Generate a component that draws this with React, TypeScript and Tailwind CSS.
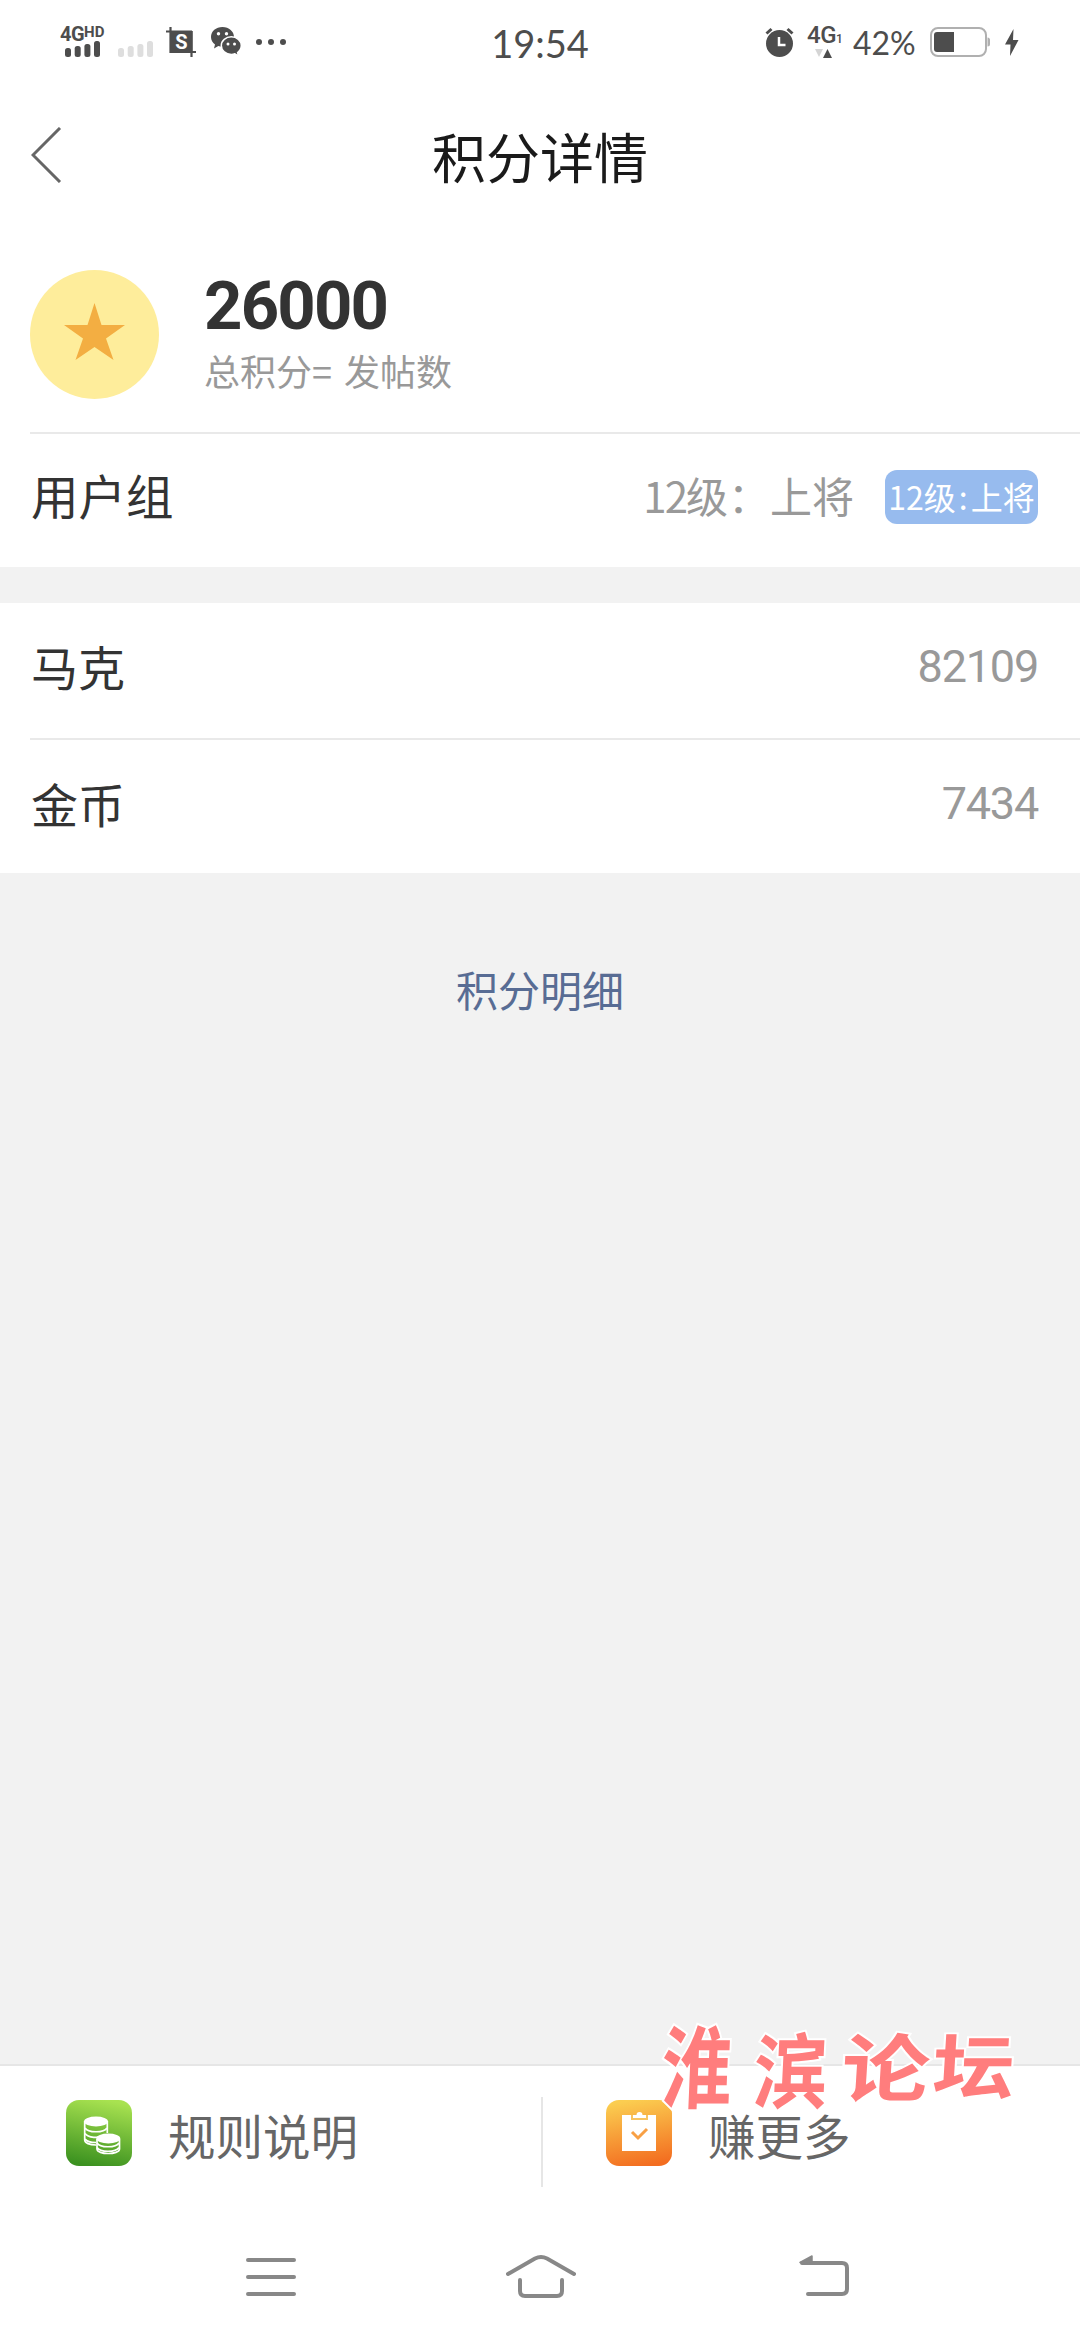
import React from 'react';

const rows = [
  { label: '马克', value: '82109' },
  { label: '金币', value: '7434' },
];

function SignalBars({ className }: { className: string }) {
  return (
    <svg width="35" height="16" viewBox="0 0 35 16" className={className} fill="currentColor">
      <rect x="0" y="7" width="6" height="9" rx="2.5" />
      <rect x="9.7" y="5" width="6" height="11" rx="2.5" />
      <rect x="19.4" y="3" width="6" height="13" rx="2.5" />
      <rect x="29" y="0" width="6" height="16" rx="2.5" />
    </svg>
  );
}

function StatusBar() {
  return (
    <div className="h-[84px] grid grid-cols-3 text-[#4d4d4d] font-['Lato','Noto_Sans_CJK_SC',sans-serif]">
      <div className="flex items-start pl-[60px] pt-[27px]">
        <div className="w-[47px] flex flex-col">
          <div className="h-[14px] flex items-start font-bold whitespace-nowrap font-['Roboto',sans-serif]">
            <span className="text-[20px] leading-[15px] tracking-[-0.5px]">4G</span>
            <span className="text-[15px] leading-[11px]">HD</span>
          </div>
          <SignalBars className="ml-[5px]" />
        </div>
        <SignalBars className="ml-[11px] mt-[14px] text-[#dedede]" />
        {/* Screenshot */}
        <svg width="30" height="30" viewBox="0 0 30 30" className="ml-[13px]">
          <path d="M0 4.500h26M4.500 0v26M4 25h26M25.500 4v26" fill="none" stroke="#4d4d4d" strokeWidth="2.200" />
          <rect x="4" y="4" width="22.500" height="22" fill="#4d4d4d" />
          <text x="15.5" y="22" textAnchor="middle" fontSize="20" fontWeight="700" fill="#fff" fontFamily="Roboto">S</text>
        </svg>
        {/* WeChat */}
        <svg width="31" height="31" viewBox="0 0 31 31" className="ml-[15px]">
          <path d="M11.500 0C5 0 0 4.300 0 10c0 3.200 1.600 5.800 4 7.500L3 21.500l4.300-2.400c1.300.4 2.700.6 4.200.6C18 19.700 23 15.500 23 10S18 0 11.500 0z" fill="#4d4d4d" />
          <circle cx="7.500" cy="6.800" r="1.700" fill="#fff" />
          <circle cx="15.500" cy="6.800" r="1.700" fill="#fff" />
          <path d="M20.300 9.800c-5.500 0-10 3.900-10 8.800s4.500 8.800 10 8.800c1.300 0 2.500-.2 3.600-.6l3.700 2.400-1-3.600c2.200-1.600 3.700-4.100 3.700-7 0-4.900-4.500-8.800-10-8.800z" fill="#4d4d4d" stroke="#fff" strokeWidth="1.500" />
          <circle cx="17" cy="17" r="1.500" fill="#fff" />
          <circle cx="23.500" cy="17" r="1.500" fill="#fff" />
        </svg>
        <svg width="30" height="6" viewBox="0 0 30 6" className="ml-[14px] mt-[12px]" fill="#4d4d4d">
          <circle cx="3" cy="3" r="3" />
          <circle cx="15" cy="3" r="3" />
          <circle cx="27" cy="3" r="3" />
        </svg>
      </div>

      <div className="pt-[19px] text-center text-[38px] leading-[48px]">19:54</div>

      <div className="flex items-start pl-[45px] pt-[26px]">
        {/* Alarm */}
        <svg width="29" height="31" viewBox="0 0 29 31" className="mt-[1px]">
          <circle cx="14.500" cy="16.500" r="13.500" fill="#4d4d4d" />
          <path d="M1.500 6.500l5-4.500M27.500 6.500l-5-4.500" stroke="#4d4d4d" strokeWidth="3" />
          <path d="M14 10v8h6.500" fill="none" stroke="#fff" strokeWidth="2.500" />
        </svg>
        <div className="ml-[13px] w-[34px] flex flex-col">
          <div className="h-[22px] flex items-start whitespace-nowrap font-['Roboto',sans-serif] font-medium">
            <span className="text-[24px] leading-[18px] tracking-[-0.5px]">4G</span>
            <span className="text-[12px] leading-[26px]">1</span>
          </div>
          <svg width="17" height="9" viewBox="0 0 17 9" className="ml-[8px] mt-[1px]">
            <path d="M0 0h8L4 8z" fill="#d5d5d5" />
            <path d="M8 9h9L12.500 0z" fill="#4d4d4d" />
          </svg>
        </div>
        <span className="ml-[12px] w-[67px] whitespace-nowrap text-[32px] leading-[34px]">42%</span>
        {/* Battery */}
        <svg width="60" height="30" viewBox="0 0 60 30" className="ml-[10px] mt-[1px]">
          <rect x="1" y="1" width="55" height="28" rx="7" fill="none" stroke="#b0b0b0" strokeWidth="2" />
          <path d="M57.500 10.500q2.500 0 2.500 2.500v4q0 2.500-2.500 2.500z" fill="#b0b0b0" />
          <path d="M7 5h17v20H7q-3 0-3-3V8q0-3 3-3z" fill="#4d4d4d" />
        </svg>
        <svg width="14" height="27" viewBox="0 0 14 27" className="ml-[15px] mt-[3px]">
          <path d="M8.500 0L0 15.500h5.500L5 27l8.500-16H8z" fill="#4d4d4d" />
        </svg>
      </div>
    </div>
  );
}

function CoinsIcon() {
  return (
    <svg width="66" height="66" viewBox="0 0 66 66">
      <defs>
        <linearGradient id="coins" x1="0.6" y1="0" x2="0.4" y2="1">
          <stop offset="0" stopColor="#a8e250" />
          <stop offset="1" stopColor="#3c9220" />
        </linearGradient>
      </defs>
      <rect width="66" height="66" rx="13" fill="url(#coins)" />
      <ellipse cx="30" cy="21.500" rx="12" ry="5" fill="#fff" />
      <g fill="none" stroke="#fff" strokeWidth="1.700">
        <path d="M18.700 21v19c0 3 5 5 11.300 5" />
        <path d="M41.300 21v12" />
        <path d="M19 28c3 5 19 5 22 0M19 33.500c3 4.500 14 5 19 2M19 39c2 3 6 3.500 11 3.500" />
        <path d="M31 39v10c0 6 22.500 6 22.500 0V39" />
        <path d="M31 43c3 5 19 5 22 0M31 47.500c3 5 19 5 22 0" />
      </g>
      <ellipse cx="42.300" cy="38.500" rx="12" ry="5" fill="#fff" />
    </svg>
  );
}

function TaskIcon() {
  return (
    <svg width="66" height="66" viewBox="0 0 66 66">
      <defs>
        <linearGradient id="task" x1="0.4" y1="0" x2="0.6" y2="1">
          <stop offset="0" stopColor="#fbcd50" />
          <stop offset="1" stopColor="#f36d20" />
        </linearGradient>
      </defs>
      <rect width="66" height="66" rx="13" fill="url(#task)" />
      <path d="M16 15h34v36H16z" fill="#fff" />
      <path d="M26 15v4h15v-4" fill="#fff" stroke="#f8c460" strokeWidth="2" />
      <path d="M27 17v-2h3.500q0-3 3-3t3 3H40v2z" fill="#fff" />
      <path d="M26 32l6 6 9-9" fill="none" stroke="#f8a044" strokeWidth="3" />
    </svg>
  );
}

export default function App() {
  return (
    <div className="relative w-[1080px] h-[2340px] flex flex-col overflow-hidden bg-[#f2f2f2] text-[#333] font-['Noto_Sans_CJK_SC',sans-serif]">
      <div className="bg-white">
        <StatusBar />

        {/* Title */}
        <div className="h-[149px] grid grid-cols-3 items-center">
          <svg width="31" height="56" viewBox="0 0 31 56" className="ml-[31px] mb-[7px]">
            <path d="M29 1L2 28l27 27" fill="none" stroke="#666" strokeWidth="3" />
          </svg>
          <h1 className="mb-[5px] text-center text-[54px] leading-[60px] text-[#1a1a1a]">积分详情</h1>
        </div>

        {/* Total score */}
        <div className="ml-[30px] h-[201px] flex items-start pt-[37px] border-b-2 border-[#e9e9e9]">
          <svg width="129" height="129" viewBox="0 0 129 129">
            <circle cx="64.500" cy="64.500" r="64.500" fill="#feed9b" />
            <path d="M64.500 33l7 22H95L76 68.500l7.500 21.500-19-13-19 13L53 68.500 34 55h23.500z" fill="#f3ae42" />
          </svg>
          <div className="ml-[45px]">
            <div className="h-[76px] text-[67px] leading-[73px] font-bold tracking-[-1.800px] font-['Roboto',sans-serif]">26000</div>
            <div className="text-[36px] leading-[48px] text-[#999] [word-spacing:4px]">总积分= 发帖数</div>
          </div>
        </div>

        {/* User group */}
        <div className="h-[133px] flex items-center pl-[31px] pr-[42px] pb-[7px]">
          <span className="flex-1 text-[47.500px] leading-[60px] pb-1">用户组</span>
          <span className="text-[42px] leading-[60px] pb-1 text-[#999]">
            <span className="tracking-[-2px]">12</span>级：上将
          </span>
          <span className="ml-[31px] w-[153px] h-[54px] rounded-xl bg-[#97bbee] text-center text-[32px] leading-[53px] whitespace-nowrap text-white">
            12级<span className="mx-[3px]">:</span>上将
          </span>
        </div>
      </div>

      <div className="mt-[36px] bg-white">
        {rows.map((row, i) => (
          <div key={row.label} className={i === 0 ? 'ml-[30px] h-[137px] border-b-2 border-[#e9e9e9]' : 'ml-[30px] h-[133px]'}>
            <div className="h-[127px] flex items-center justify-between pl-px pr-[42px]">
              <span className="text-[47px]">{row.label}</span>
              <span className="text-[45px] tracking-[-1.200px] text-[#999] font-['Roboto',sans-serif]">{row.value}</span>
            </div>
          </div>
        ))}
      </div>

      <div className="flex-1 pt-[86px] text-center text-[42px] leading-[60px] text-[#586c94]">积分明细</div>

      {/* Bottom actions */}
      <div className="h-[150px] flex bg-white border-t-2 border-[#e6e6e6] text-[47.500px] text-[#666]">
        <div className="w-[541px] flex items-start pl-[66px] pt-[34px]">
          <CoinsIcon />
          <span className="ml-[36px] leading-[70px]">规则说明</span>
        </div>
        <div className="mt-[31px] w-[2px] h-[90px] bg-[#e6e6e6]" />
        <div className="flex-1 flex items-start pl-[63px] pt-[34px]">
          <TaskIcon />
          <span className="ml-[36px] leading-[70px]">赚更多</span>
        </div>
      </div>

      {/* System navigation */}
      <div className="h-[126px] flex items-start bg-white pt-[40px]">
        <svg width="50" height="42" viewBox="0 0 50 42" className="ml-[246px]" stroke="#888" strokeWidth="4" strokeLinecap="round">
          <path d="M2 6h46M2 23h46M2 40h46" />
        </svg>
        <svg width="70" height="44" viewBox="0 0 70 44" className="ml-[210px]" fill="none" stroke="#888" strokeWidth="4" strokeLinecap="round">
          <path d="M2 20L29 4.500q6-3 12 0L68 20" />
          <path d="M14 26v11q0 5 5 5h32q5 0 5-5V26" />
        </svg>
        <svg width="54" height="44" viewBox="0 0 54 44" className="ml-[222px]" fill="none" stroke="#888" strokeWidth="4" strokeLinecap="round" strokeLinejoin="round">
          <path d="M4 9h40q5 0 5 5v21q0 5-5 5H10" />
          <path d="M2 8.500L14 2v7z" fill="#888" strokeWidth="1.500" />
        </svg>
      </div>

      {/* Watermark */}
      <div className="absolute left-[662px] top-[2014px] flex text-[78px] leading-[96px] font-bold text-[#ff7d7d] [-webkit-text-stroke:4px_white] [paint-order:stroke_fill]">
        <span className="w-[92px] origin-left scale-x-[0.9] scale-y-[1.15] -skew-x-3">淮</span>
        <span className="w-[88px] origin-left scale-x-[0.95] scale-y-105 -skew-x-3 pt-[4px]">滨</span>
        <span className="w-[88px] origin-left scale-x-[1.13] scale-y-95 -skew-x-3 pt-[2px]">论</span>
        <span className="w-[85px] origin-left scale-x-[1.05] scale-y-[0.9] -skew-x-3 ml-[3px]">坛</span>
      </div>
    </div>
  );
}
